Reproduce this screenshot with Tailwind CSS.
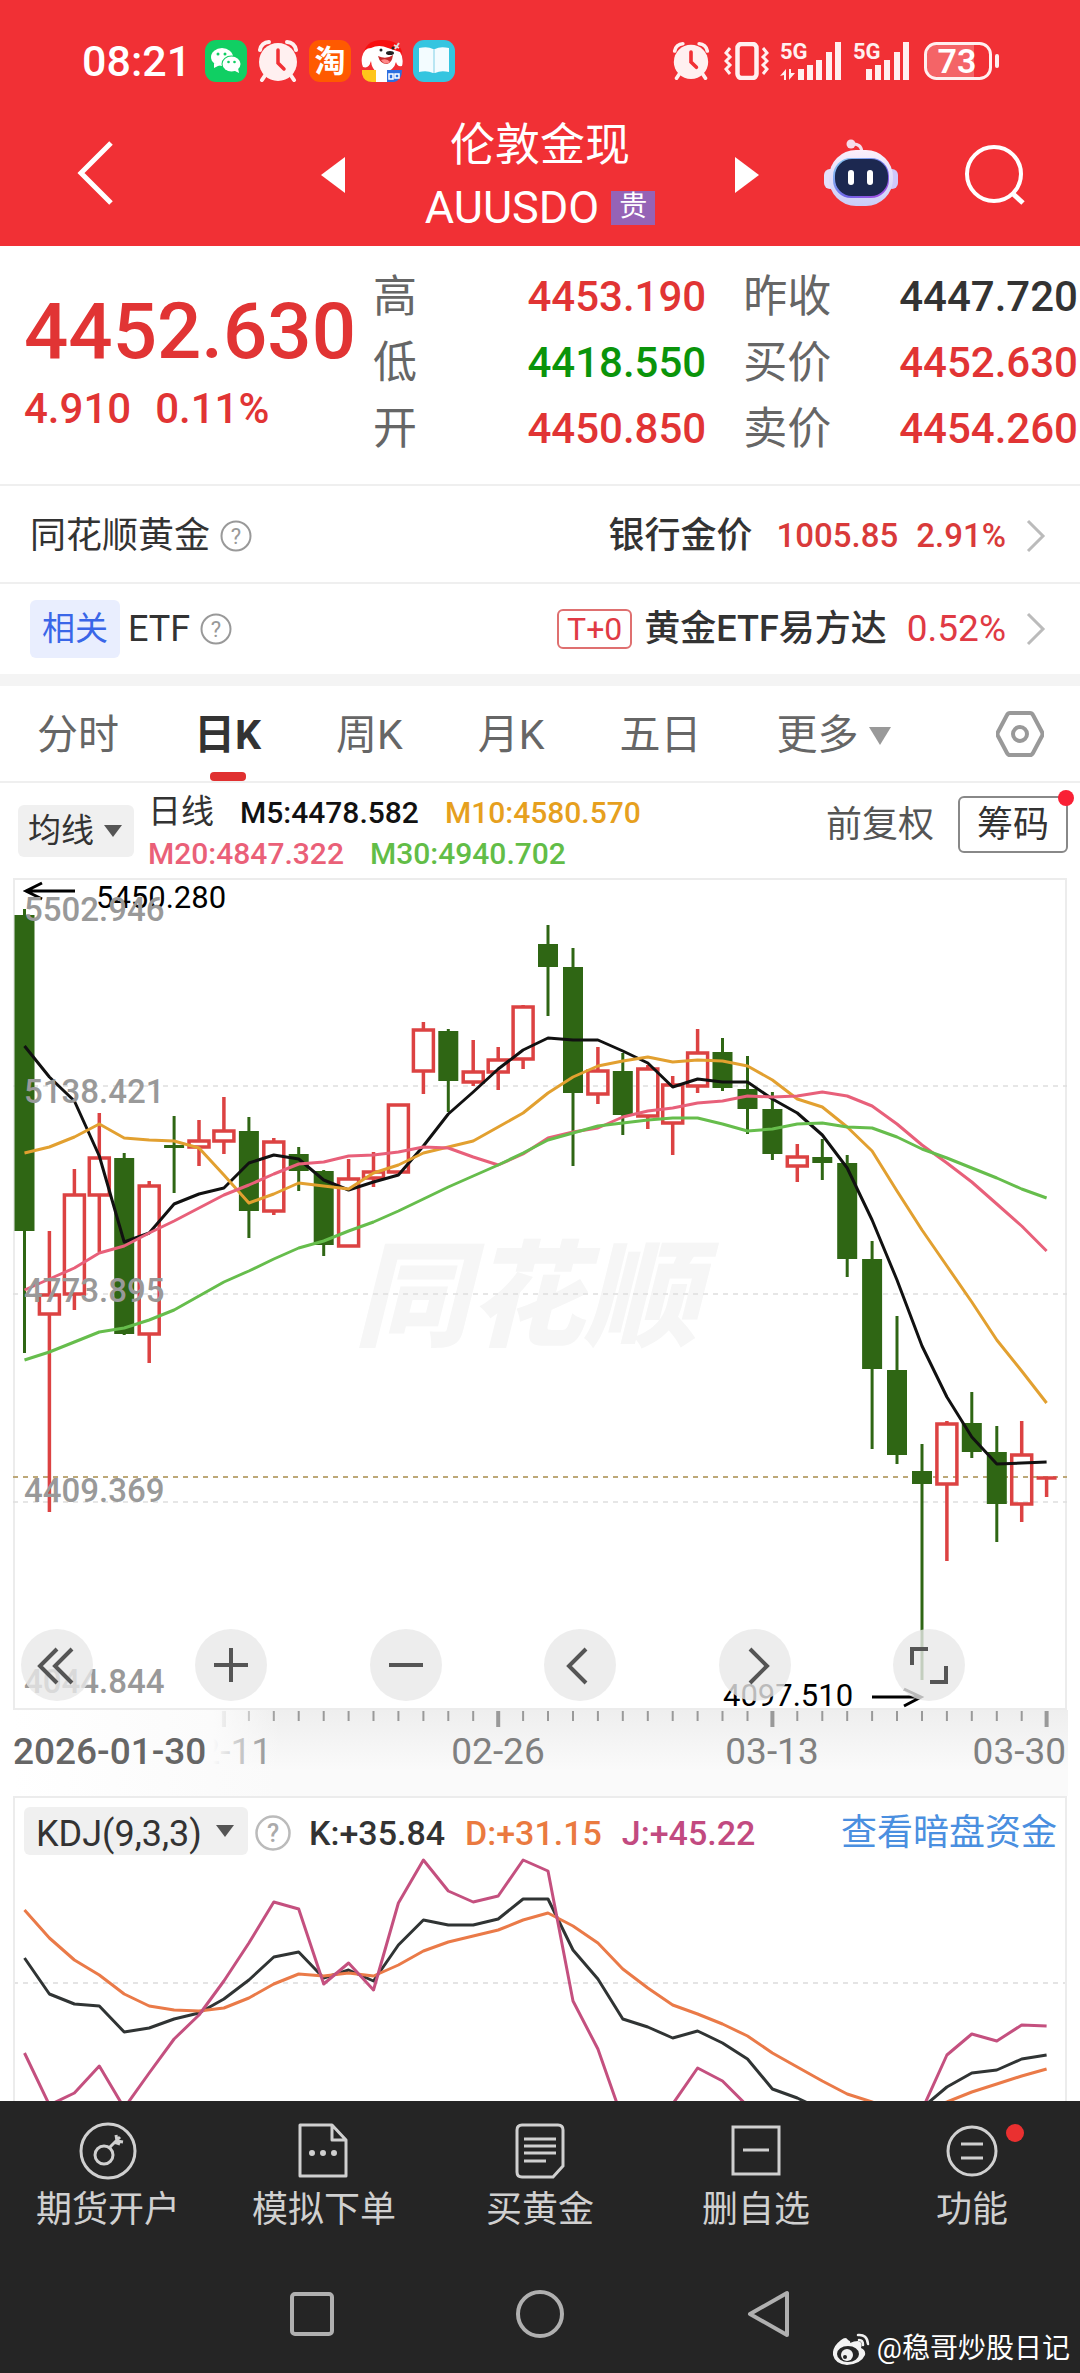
<!DOCTYPE html>
<html lang="zh-CN">
<head>
  <meta charset="UTF-8" />
  <meta name="viewport" content="width=device-width, initial-scale=1.0" />
  <title>伦敦金现 AUUSDO</title>
  <script src="https://cdn.jsdelivr.net/npm/@tailwindcss/browser@4"></script>
</head>
<body class="min-h-screen flex flex-col bg-white text-[#333] font-['Roboto','Noto_Sans_CJK_SC',sans-serif]">

  <header class="bg-[#f13035] text-white pb-[7px]">
    <!-- status bar -->
    <div class="flex items-center justify-between h-[111px] pt-[11px] pl-[82px] pr-20">
      <div class="flex items-center gap-[10px]">
        <span class="text-[43px] leading-none font-medium mr-1">08:21</span>
        <svg class="size-[42px]" viewBox="0 0 42 42">
          <rect width="42" height="42" rx="11" fill="#10cf63" />
          <ellipse cx="17" cy="17" rx="11" ry="9" fill="#fff" />
          <path d="M9 23l0 5 6-3z" fill="#fff" />
          <circle cx="13" cy="14" r="1.5" fill="#10cf63" /><circle cx="20" cy="14" r="1.5" fill="#10cf63" />
          <ellipse cx="26.500" cy="24" rx="10" ry="8.500" fill="#10cf63" />
          <ellipse cx="26.500" cy="24" rx="9" ry="7.500" fill="#fff" />
          <path d="M33 28l1 5-6-3z" fill="#fff" />
          <circle cx="23.500" cy="22" r="1.300" fill="#10cf63" /><circle cx="29.500" cy="22" r="1.300" fill="#10cf63" />
        </svg>
        <svg class="size-[42px]" viewBox="0 0 42 42" fill="none">
          <path d="M3 10A9 9 0 0 1 12 2M39 10A9 9 0 0 0 30 2" stroke="#fff0f0" stroke-width="4" stroke-linecap="round" />
          <path d="M9 34l-4 6M33 34l4 6" stroke="#fff0f0" stroke-width="4" stroke-linecap="round" />
          <circle cx="21" cy="22" r="19" fill="#fff0f0" />
          <path d="M21 10v13l6 6" stroke="#f13035" stroke-width="3.500" stroke-linecap="round" />
        </svg>
        <span class="flex items-center justify-center size-[42px] rounded-[11px] bg-[#ff5a00] text-[31px] leading-none font-bold">淘</span>
        <svg class="size-[42px]" viewBox="0 0 42 42">
          <path d="M2 16Q4 0 21 0T41 12L38 24H4z" fill="#f80f10" />
          <path d="M1 17q2-9 9-9 8-4 17 0l12 4q4 6 2 14-5 1-6-4-2 9-13 11-11 0-12-12-2 8-8 6-2-4-1-10z" fill="#fff" />
          <path d="M17 16q8 4 15-1-1 8-6 9-7 0-9-8z" fill="#c92a2a" />
          <path d="M20 20q6-2 9 2-5 4-9-2z" fill="#ff8a8a" />
          <ellipse cx="29" cy="13" rx="4" ry="2" fill="#222" />
          <circle cx="20" cy="10" r="1.500" fill="#222" /><circle cx="32" cy="8" r="1.500" fill="#222" />
          <path d="M33 5l5 3M38 3l-4 6" stroke="#ddd" stroke-width="2" />
          <path d="M1 30h14v12H11Q3 42 1 34z" fill="#ffc61a" />
          <path d="M15 30h11v12H15z" fill="#fff" />
          <path d="M26 30h15q0 10-8 12h-7z" fill="#2c6fe0" />
          <path d="M28 34h4v5h-4zM34 34h4v4h-4z" fill="none" stroke="#fff" stroke-width="1.500" />
        </svg>
        <svg class="size-[42px]" viewBox="0 0 42 42">
          <rect width="42" height="42" rx="11" fill="#35c5e0" />
          <path d="M6 8q9-2 14 1v24q-6-3-14-1zM36 8q-9-2-14 1v24q6-3 14-1z" fill="#f3fcff" />
          <path d="M20 9h2v24h-2z" fill="#b9e6f3" />
        </svg>
      </div>
      <div class="flex items-center">
        <svg class="w-[38px] h-[38px] mr-[14px]" viewBox="0 0 42 42" fill="none">
          <path d="M3 10A9 9 0 0 1 12 2M39 10A9 9 0 0 0 30 2M9 34l-4 6M33 34l4 6" stroke="#fff0f0" stroke-width="4" stroke-linecap="round" />
          <circle cx="21" cy="22" r="19" fill="#fff0f0" />
          <path d="M21 11v11l6 6" stroke="#f13035" stroke-width="4" stroke-linecap="round" />
        </svg>
        <svg class="w-[45px] h-[38px] mr-[11px]" viewBox="0 0 45 38" fill="none" stroke="#fff0f0">
          <rect x="13.500" y="2" width="19" height="34" rx="4" stroke-width="4.500" />
          <path d="M6 6L2 11l4 4-4 4 4 4-4 4 4 5M39 6l4 5-4 4 4 4-4 4 4 4-4 5" stroke-width="3" />
        </svg>
        <svg class="overflow-visible w-[62px] h-[38px] mr-[11px]" viewBox="0 0 62 38" fill="#fff0f0">
          <text x="0" y="17" font-size="22" font-weight="700">5G</text>
          <path d="M18 27h6v11h-6zM27 23h6v15h-6zM36 18h6v20h-6zM46 10h6v28h-6zM55 0h6v38h-6z" />
          <path d="M0 34l6-7v11H4v-5zM9 27v11l6-7h-4v-4z" />
        </svg>
        <svg class="overflow-visible w-[57px] h-[38px] mr-[14px]" viewBox="0 0 57 38" fill="#fff0f0">
          <text x="0" y="17" font-size="22" font-weight="700">5G</text>
          <path d="M13 27h6v11h-6zM22 23h6v15h-6zM31 18h6v20h-6zM41 10h6v28h-6zM50 0h6v38h-6z" />
        </svg>
        <svg class="overflow-visible w-[76px] h-[38px]" viewBox="0 0 76 38">
          <path d="M50 3H14Q3 3 3 14v10q0 11 11 11h36z" fill="#fff" fill-opacity=".25" />
          <rect x="1.500" y="1.500" width="65" height="35" rx="11" fill="none" stroke="#fff0f0" stroke-width="3" />
          <rect x="71" y="12" width="4" height="14" rx="2" fill="#fff0f0" />
          <text x="33" y="31" font-size="34" font-weight="600" fill="#fff" text-anchor="middle">73</text>
        </svg>
      </div>
    </div>

    <!-- title bar -->
    <div class="grid grid-cols-[1fr_auto_1fr] items-center h-[128px]">
      <button type="button" aria-label="返回" class="justify-self-start ml-[76px] mb-1">
        <svg class="w-[38px] h-[64px]" viewBox="0 0 38 64" fill="none" stroke="#fff" stroke-width="5"><path d="M35 2L5 32l30 30" /></svg>
      </button>
      <div class="flex items-center justify-between w-[438px]">
        <button type="button" aria-label="上一个"><svg class="w-6 h-9" viewBox="0 0 24 36" fill="#fff"><path d="M24 0v36L0 18z" /></svg></button>
        <h1 class="pt-1 text-center text-[45px] leading-[62px]">
          <span class="block">伦敦金现</span>
          <span class="flex items-center justify-center gap-3">AUUSDO
            <span class="w-11 h-[34px] bg-[#9563b6] text-[28px] leading-[32px]">贵</span>
          </span>
        </h1>
        <button type="button" aria-label="下一个"><svg class="w-6 h-9" viewBox="0 0 24 36" fill="#fff"><path d="M0 0v36l24-18z" /></svg></button>
      </div>
      <div class="flex items-center justify-end gap-[66px] pr-[54px]">
        <button type="button" aria-label="智能助手" class="mb-1">
          <svg class="w-[74px] h-[68px]" viewBox="0 0 74 68">
            <defs>
              <linearGradient id="shell" x1="0" y1="0" x2="0" y2="1"><stop offset="0" stop-color="#fbeffb" /><stop offset="1" stop-color="#c9cdf8" /></linearGradient>
              <linearGradient id="rim" x1="0" y1="0" x2="1" y2="1"><stop offset="0" stop-color="#8fd6f5" /><stop offset=".6" stop-color="#6d64e8" /><stop offset="1" stop-color="#b04ae0" /></linearGradient>
            </defs>
            <path d="M28 5q9-1 10 8" fill="none" stroke="#f6dcea" stroke-width="3" />
            <circle cx="27" cy="5" r="4.500" fill="#f6dcea" />
            <rect x="0" y="30" width="12" height="20" rx="6" fill="#e4e0fb" />
            <rect x="62" y="30" width="12" height="20" rx="6" fill="#cfc8fa" />
            <rect x="5" y="11" width="64" height="56" rx="27" fill="url(#shell)" />
            <rect x="9" y="19" width="56" height="40" rx="18" fill="url(#rim)" />
            <rect x="11" y="20" width="53" height="37" rx="17" fill="#1c2850" />
            <rect x="24" y="31" width="6" height="15" rx="3" fill="#fff" />
            <rect x="43" y="31" width="6" height="15" rx="3" fill="#fff" />
          </svg>
        </button>
        <button type="button" aria-label="搜索">
          <svg class="size-[62px]" viewBox="0 0 62 62" fill="none" stroke="#fff" stroke-width="4"><circle cx="30" cy="30" r="27" /><path d="M48 49l11 10" stroke-width="5" /></svg>
        </button>
      </div>
    </div>
  </header>

  <!-- quote -->
  <section class="flex justify-between h-[240px] pl-6 pr-[2px] pt-[18px] border-b-2 border-[#efefef] text-[42px] font-medium text-[#e13434]">
    <div>
      <div class="text-[78px] leading-[80px] mt-7">4452.630</div>
      <div class="flex gap-6 leading-[74px]"><span>4.910</span><span>0.11%</span></div>
    </div>
    <dl class="grid grid-cols-[auto_1fr_auto_auto] content-start w-[705px] leading-[66px]">
      <dt class="text-[44px] font-normal text-[#666]">高</dt><dd class="text-right pr-[37px]">4453.190</dd>
      <dt class="text-[44px] font-normal text-[#666] pr-[68px]">昨收</dt><dd class="text-[#333]">4447.720</dd>
      <dt class="text-[44px] font-normal text-[#666]">低</dt><dd class="text-right pr-[37px] text-[#0a940a]">4418.550</dd>
      <dt class="text-[44px] font-normal text-[#666]">买价</dt><dd>4452.630</dd>
      <dt class="text-[44px] font-normal text-[#666]">开</dt><dd class="text-right pr-[37px]">4450.850</dd>
      <dt class="text-[44px] font-normal text-[#666]">卖价</dt><dd>4454.260</dd>
    </dl>
  </section>

  <a href="#gold" class="flex items-center h-[98px] pt-1 pl-[30px] pr-[34px] border-b-2 border-[#efefef] text-[36px]">
    同花顺黄金
    <svg class="size-8 ml-[10px]" viewBox="0 0 32 32"><circle cx="16" cy="16" r="14.500" fill="none" stroke="#999" stroke-width="2" /><text x="16" y="24" font-size="22" fill="#999" text-anchor="middle">?</text></svg>
    <span class="ml-auto font-medium">银行金价</span>
    <span class="ml-6 text-[33px] font-medium text-[#d93a3a]">1005.85</span>
    <span class="ml-[18px] text-[33px] font-medium text-[#d93a3a]">2.91%</span>
    <svg class="w-5 h-[34px] ml-5" viewBox="0 0 20 34" fill="none" stroke="#bbb" stroke-width="3"><path d="M2 2l15 15L2 32" /></svg>
  </a>
  <a href="#etf" class="flex items-center h-[90px] pl-[30px] pr-[34px] text-[36px]">
    <span class="px-3 mr-2 rounded-md bg-[#e9eefe] text-[#3a66e8] text-[33px] leading-[58px]">相关</span>
    ETF
    <svg class="size-8 ml-[10px]" viewBox="0 0 32 32"><circle cx="16" cy="16" r="14.500" fill="none" stroke="#999" stroke-width="2" /><text x="16" y="24" font-size="22" fill="#999" text-anchor="middle">?</text></svg>
    <span class="ml-auto px-2 border-2 border-[#df7070] rounded-md text-[32px] leading-[36px] text-[#e03a44]">T+0</span>
    <span class="ml-3 font-medium">黄金ETF易方达</span>
    <span class="ml-5 text-[37px] text-[#e03a44]">0.52%</span>
    <svg class="w-5 h-[34px] ml-5" viewBox="0 0 20 34" fill="none" stroke="#bbb" stroke-width="3"><path d="M2 2l15 15L2 32" /></svg>
  </a>
  <div class="h-3 bg-[#f4f4f4]"></div>

  <!-- period tabs -->
  <nav class="flex items-stretch gap-[75px] h-[97px] pl-[37px] pr-9 border-b-2 border-[#efefef] text-[41px] text-[#666]">
    <button type="button" class="pt-1">分时</button>
    <button type="button" class="relative pt-1 font-bold text-[#333]">日K<span class="absolute bottom-0 left-1/2 -translate-x-1/2 w-9 h-[9px] rounded bg-[#e03030]"></span></button>
    <button type="button" class="pt-1">周K</button>
    <button type="button" class="pt-1">月K</button>
    <button type="button" class="pt-1">五日</button>
    <button type="button" class="flex items-center gap-[10px] pt-1">更多<svg class="w-[22px] h-[18px]" viewBox="0 0 22 18" fill="#999"><path d="M0 0h22L11 18z" /></svg></button>
    <button type="button" aria-label="设置" class="ml-auto">
      <svg class="size-12" viewBox="0 0 48 48" fill="none" stroke="#999" stroke-width="4"><path d="M14 3h20q2 0 3 2l9 17q1 2 0 4l-9 17q-1 2-3 2H14q-2 0-3-2L2 26q-1-2 0-4l9-17q1-2 3-2z" /><circle cx="24" cy="24" r="7" /></svg>
    </button>
  </nav>

  <!-- moving averages -->
  <div class="flex items-center h-[95px] pl-[18px] pr-3">
    <label class="relative">
      <select aria-label="指标" class="appearance-none w-[116px] h-[52px] pl-[10px] rounded-md bg-[#f0f0f0] text-[33px] outline-none"><option>均线</option></select>
      <svg class="absolute right-3 top-5 w-[18px] h-3 pointer-events-none" viewBox="0 0 18 12" fill="#555"><path d="M0 0h18L9 12z" /></svg>
    </label>
    <div class="ml-[14px] pt-1 text-[30px] leading-[41px] font-medium">
      <div><span class="text-[33px] font-normal mr-[26px]">日线</span><span class="text-[#111] mr-[26px]">M5:4478.582</span><span class="text-[#e6a01e]">M10:4580.570</span></div>
      <div><span class="text-[#ea6078] mr-[26px]">M20:4847.322</span><span class="text-[#62bd47]">M30:4940.702</span></div>
    </div>
    <div class="flex items-center gap-6 ml-auto mb-3 text-[36px]">
      <button type="button" class="text-[#555]">前复权</button>
      <button type="button" class="relative w-[110px] h-[57px] border-2 border-[#888] rounded-md leading-none">筹码<span class="absolute -top-2 -right-2 size-4 rounded-full bg-[#f92035]"></span></button>
    </div>
  </div>

  <!-- candles -->
  <div class="relative mx-[13px] border-2 border-[#ececec]">
    <svg id="kline" class="block w-full overflow-visible" viewBox="15 2 1050 828">
      <text x="354" y="459" font-size="115" font-weight="900" font-style="italic" fill="#f6f6f6">同花顺</text>
      <path d="M13 208h1054M13 416h1054M13 624h1054" stroke="#dedede" stroke-width="1.500" stroke-dasharray="5 5" />
      <path d="M13 599h1054" stroke="#bda878" stroke-width="2" stroke-dasharray="5 5" />
      <g id="candles"></g>
      <g id="averages" fill="none" stroke-width="3" stroke-linejoin="round"></g>
      <g font-size="31" fill="#000">
        <text x="96" y="30">5450.280</text>
        <text x="723" y="828">4097.510</text>
      </g>
      <path d="M75 13H26M42 5L26 13l16 8M872 819h48M904 811l17 8-17 9" fill="none" stroke="#000" stroke-width="3" />
      <g font-size="33" font-weight="500" fill="#999">
        <text x="24" y="43">5502.946</text>
        <text x="24" y="225">5138.421</text>
        <text x="24" y="424">4773.895</text>
        <text x="24" y="624">4409.369</text>
        <text x="24" y="815">4044.844</text>
      </g>
    </svg>
    <!-- chart controls -->
    <div class="absolute left-[6px] right-[100px] bottom-[7px] flex justify-between">
      <button type="button" aria-label="最早" class="size-[72px] rounded-full bg-[#e9e9e9]/80"><svg viewBox="0 0 72 72" fill="none" stroke="#555" stroke-width="4"><path d="M36 20L19 37l17 17M51 20L34 37l17 17" /></svg></button>
      <button type="button" aria-label="放大" class="size-[72px] rounded-full bg-[#e9e9e9]/80"><svg viewBox="0 0 72 72" fill="none" stroke="#555" stroke-width="4"><path d="M19 36h34M36 19v34" /></svg></button>
      <button type="button" aria-label="缩小" class="size-[72px] rounded-full bg-[#e9e9e9]/80"><svg viewBox="0 0 72 72" fill="none" stroke="#555" stroke-width="4"><path d="M19 36h34" /></svg></button>
      <button type="button" aria-label="左移" class="size-[72px] rounded-full bg-[#e9e9e9]/80"><svg viewBox="0 0 72 72" fill="none" stroke="#555" stroke-width="4"><path d="M42 20L25 37l17 17" /></svg></button>
      <button type="button" aria-label="右移" class="size-[72px] rounded-full bg-[#e9e9e9]/80"><svg viewBox="0 0 72 72" fill="none" stroke="#555" stroke-width="4"><path d="M31 20l17 17-17 17" /></svg></button>
      <button type="button" aria-label="全屏" class="size-[72px] rounded-full bg-[#e9e9e9]/80"><svg viewBox="0 0 72 72" fill="none" stroke="#555" stroke-width="4"><path d="M19 36V20h16M37 53h16V37" /></svg></button>
    </div>
  </div>
  <svg class="block w-full" viewBox="0 0 1080 86">
    <defs>
      <linearGradient id="axisbg" x1="0" y1="0" x2="0" y2="1"><stop offset="0" stop-color="#eeeeee" /><stop offset=".7" stop-color="#fafafa" /></linearGradient>
      <linearGradient id="axisfade" x1="0" y1="0" x2="1" y2="0"><stop offset="0" stop-color="#fff" /><stop offset=".75" stop-color="#fbfbfb" /><stop offset="1" stop-color="#fbfbfb" stop-opacity="0" /></linearGradient>
    </defs>
    <rect x="13" width="1055" height="86" fill="url(#axisbg)" />
    <g id="ticks" stroke="#999"></g>
    <g font-size="37" fill="#808080">
      <text x="272" y="54" text-anchor="end">02-11</text>
      <text x="498" y="54" text-anchor="middle">02-26</text>
      <text x="772" y="54" text-anchor="middle">03-13</text>
      <text x="1066" y="54" text-anchor="end">03-30</text>
    </g>
    <rect x="13" width="267" height="86" fill="url(#axisfade)" />
    <text x="13" y="54" font-size="37" font-weight="500" fill="#666">2026-01-30</text>
  </svg>

  <!-- KDJ -->
  <section class="mx-[13px] border-2 border-b-0 border-[#ececec]">
    <div class="flex items-center h-[58px] pt-3 pl-[9px] pr-2 text-[34px] font-medium">
      <label class="relative">
        <select aria-label="副图指标" class="appearance-none w-[224px] h-12 pl-3 rounded-md bg-[#f0f0f0] text-[36px] font-normal outline-none"><option>KDJ(9,3,3)</option></select>
        <svg class="absolute right-[14px] top-[18px] w-[18px] h-3 pointer-events-none" viewBox="0 0 18 12" fill="#555"><path d="M0 0h18L9 12z" /></svg>
      </label>
      <svg class="size-9 ml-[7px]" viewBox="0 0 36 36"><circle cx="18" cy="18" r="16.500" fill="none" stroke="#bbb" stroke-width="2.500" /><text x="18" y="27" font-size="25" fill="#aaa" text-anchor="middle">?</text></svg>
      <span class="ml-[18px]">K:+35.84</span>
      <span class="ml-5 text-[#ea7a40]">D:+31.15</span>
      <span class="ml-5 text-[#c24a80]">J:+45.22</span>
      <a href="#funds" class="ml-auto text-[36px] font-normal text-[#4a8fe0]">查看暗盘资金</a>
    </div>
    <svg class="block w-full" viewBox="15 60 1050 245">
      <path d="M13 187h1054" stroke="#e4e4e4" stroke-width="2" stroke-dasharray="5 5" />
      <g id="kdj" fill="none" stroke-width="3" stroke-linejoin="round"></g>
    </svg>
  </section>

  <footer class="grow bg-[#252525] text-[#d0d0d0]">
    <nav class="grid grid-cols-5 pt-5 text-[36px] leading-[50px]">
      <a href="#account" class="flex flex-col items-center gap-1">
        <svg class="size-[60px]" viewBox="0 0 60 60" fill="none" stroke="currentColor" stroke-width="3"><circle cx="30" cy="30" r="27" /><circle cx="26" cy="34" r="9" /><path d="M31 27l11-11M36 21l6 2M38 14l1 6 6 1" /></svg>
        期货开户
      </a>
      <a href="#demo" class="flex flex-col items-center gap-1">
        <svg class="size-[60px]" viewBox="0 0 60 60" fill="none" stroke="currentColor" stroke-width="3"><path d="M8 4h30l14 15v36H6V4zM38 4v15h14" stroke-linejoin="round" /><circle cx="18" cy="32" r="1.500" /><circle cx="29" cy="32" r="1.500" /><circle cx="40" cy="32" r="1.500" /></svg>
        模拟下单
      </a>
      <a href="#buy" class="flex flex-col items-center gap-1">
        <svg class="size-[60px]" viewBox="0 0 60 60" fill="none" stroke="currentColor" stroke-width="3"><path d="M12 4h36q5 0 5 5v36L43 56H12q-5 0-5-5V9q0-5 5-5z" /><path d="M14 18h32M14 25h32M14 32h32M14 40h22" /></svg>
        买黄金
      </a>
      <a href="#remove" class="flex flex-col items-center gap-1">
        <svg class="size-[60px]" viewBox="0 0 60 60" fill="none" stroke="currentColor" stroke-width="3"><rect x="7" y="6" width="46" height="47" /><path d="M17 29h26" /></svg>
        删自选
      </a>
      <a href="#more" class="relative flex flex-col items-center gap-1">
        <svg class="size-[60px]" viewBox="0 0 60 60" fill="none" stroke="currentColor" stroke-width="3"><circle cx="30" cy="30" r="24" /><path d="M19 23h22M19 37h22" /></svg>
        功能
        <span class="absolute top-[3px] left-1/2 ml-[34px] size-[18px] rounded-full bg-[#ea3030]"></span>
      </a>
    </nav>
    <!-- system keys -->
    <div class="flex items-center justify-center gap-[180px] mt-[54px] h-[50px]">
      <svg class="size-12" viewBox="0 0 48 48" fill="none" stroke="#b0b0b0" stroke-width="4"><rect x="4" y="4" width="40" height="40" rx="3" /></svg>
      <svg class="size-12" viewBox="0 0 48 48" fill="none" stroke="#b0b0b0" stroke-width="4"><circle cx="24" cy="24" r="22" /></svg>
      <svg class="size-12" viewBox="0 0 48 48" fill="none" stroke="#b0b0b0" stroke-width="4" stroke-linejoin="round"><path d="M43 3v42L6 24z" /></svg>
    </div>
    <div class="flex items-center justify-end gap-[6px] pr-[10px] -mt-2 text-[28px] leading-[36px] text-white">
      <svg class="w-[38px] h-8" viewBox="0 0 38 32" fill="none">
        <path d="M15 7q-2-4-7 0-9 7-8 15 2 9 14 10 14-1 18-10 1-5-4-7 2-6-3-7-4 0-8 2 1-2-2-3z" fill="#f2f2f2" />
        <ellipse cx="15" cy="21" rx="11" ry="8" fill="#252525" />
        <circle cx="14" cy="22" r="6" fill="#f2f2f2" />
        <circle cx="12" cy="24" r="2" fill="#252525" />
        <path d="M25 2q9-1 10 9M26 7q4 0 4 5" stroke="#f2f2f2" stroke-width="2.500" stroke-linecap="round" />
      </svg>
      @稳哥炒股日记
    </div>
  </footer>

  <script>
    const STEP = 24.93;
    const cx = (i) => +(24.5 + STEP * i).toFixed(1);

    // [up?, body top, body bottom, high, low]
    const candles = [
      [0, 37, 353, 31, 475], [1, 417, 436, 353, 634], [1, 317, 416, 291, 432], [1, 280, 317, 235, 374],
      [0, 280, 456, 275, 457], [1, 308, 456, 303, 485], [0, 267, 270, 238, 315], [1, 263, 269, 242, 288],
      [1, 253, 263, 219, 276], [0, 253, 333, 239, 360], [1, 264, 333, 260, 337], [0, 276, 293, 269, 313],
      [0, 293, 367, 292, 378], [1, 301, 368, 281, 368], [1, 294, 300, 274, 309], [1, 227, 294, 227, 294],
      [1, 152, 193, 144, 216], [0, 153, 203, 151, 234], [1, 194, 204, 162, 208], [1, 182, 194, 169, 212],
      [1, 129, 181, 127, 191], [0, 66, 89, 47, 138], [0, 89, 215, 70, 288], [1, 193, 216, 169, 226],
      [0, 193, 237, 175, 257], [1, 191, 238, 187, 251], [1, 207, 245, 198, 277], [1, 175, 208, 151, 215],
      [0, 174, 210, 160, 213], [0, 211, 231, 178, 256], [0, 231, 276, 214, 282], [1, 279, 288, 266, 304],
      [0, 279, 285, 261, 302], [0, 285, 381, 277, 399], [0, 381, 491, 363, 571], [0, 492, 577, 438, 586],
      [0, 593, 606, 566, 802], [1, 546, 606, 543, 683], [0, 545, 574, 514, 580], [0, 574, 626, 548, 664],
      [1, 577, 626, 543, 644], [1, 600, 600, 600, 619],
    ];

    const averages = [
      ['#111', [168, 199, 223, 278, 364, 355, 326, 316, 310, 285, 277, 281, 302, 312, 304, 297, 268, 236, 214, 191, 172, 160, 162, 162, 173, 185, 209, 201, 204, 204, 221, 235, 257, 290, 342, 402, 468, 519, 559, 586, 585, 584]],
      ['#e2a030', [275, 269, 259, 246, 260, 262, 263, 270, 297, 325, 316, 305, 308, 311, 295, 287, 275, 269, 263, 249, 235, 215, 199, 188, 183, 179, 184, 182, 183, 188, 202, 221, 229, 249, 273, 313, 352, 388, 424, 462, 493, 525]],
      ['#e8607a', [412, 401, 390, 375, 368, 355, 343, 330, 317, 307, 296, 286, 284, 278, 277, 274, 269, 270, 279, 287, 276, 260, 254, 250, 239, 233, 230, 225, 223, 218, 219, 218, 214, 218, 228, 246, 267, 285, 304, 326, 348, 373]],
      ['#66bd4c', [482, 474, 464, 454, 450, 442, 432, 418, 404, 393, 381, 370, 363, 353, 344, 333, 321, 309, 298, 287, 275, 262, 255, 248, 245, 242, 240, 240, 246, 253, 251, 246, 245, 249, 250, 259, 271, 280, 290, 300, 311, 320]],
    ];

    const kdj = [
      ['#303434', [162, 198, 208, 210, 236, 232, 223, 217, 203, 184, 161, 156, 182, 174, 185, 149, 124, 129, 129, 123, 103, 103, 154, 183, 223, 231, 242, 235, 247, 263, 293, 302, 314, 325, 330, 328, 312, 291, 277, 274, 263, 259]],
      ['#ea7a48', [114, 142, 164, 179, 198, 210, 214, 215, 212, 202, 188, 178, 180, 177, 180, 169, 155, 146, 140, 134, 124, 117, 130, 147, 173, 192, 209, 218, 228, 240, 257, 271, 285, 298, 306, 314, 314, 306, 296, 288, 280, 273]],
      ['#c4507f', [257, 309, 297, 270, 312, 277, 243, 219, 185, 147, 106, 113, 188, 167, 194, 107, 64, 95, 106, 100, 64, 75, 205, 253, 324, 330, 308, 272, 285, 310, 330, 340, 345, 345, 340, 330, 314, 259, 238, 245, 229, 230]],
    ];

    const line = ([color, ys]) => `<polyline stroke="${color}" points="${ys.map((y, i) => `${cx(i)},${y}`).join(' ')}" />`;

    document.getElementById('candles').innerHTML = candles.map(([up, top, bottom, high, low], i) => {
      const x = cx(i);
      if (up) {
        // a path, so that a session that opens and closes level still shows its bar
        return `<path d="M${x} ${high}V${top}M${x} ${bottom}V${low}M${x - 10} ${top}h20v${bottom - top}h-20z" fill="none" stroke="#dc4242" stroke-width="3.5" />`;
      }
      return `<path d="M${x} ${high}V${low}" stroke="#2f6614" stroke-width="3" /><rect x="${x - 10}" y="${top}" width="20" height="${bottom - top}" fill="#2f6614" />`;
    }).join('');

    document.getElementById('averages').innerHTML = averages.map(line).join('');
    document.getElementById('kdj').innerHTML = kdj.map(line).join('');

    // a long tick every 11 sessions
    let ticks = '';
    for (let i = 8; i < 42; i++) {
      const major = (i - 8) % 11 === 0;
      ticks += `<path d="M${cx(i)} 1v${major ? 16 : 10}" stroke-width="${major ? 4 : 2}" />`;
    }
    document.getElementById('ticks').innerHTML = ticks;
  </script>

</body>
</html>
